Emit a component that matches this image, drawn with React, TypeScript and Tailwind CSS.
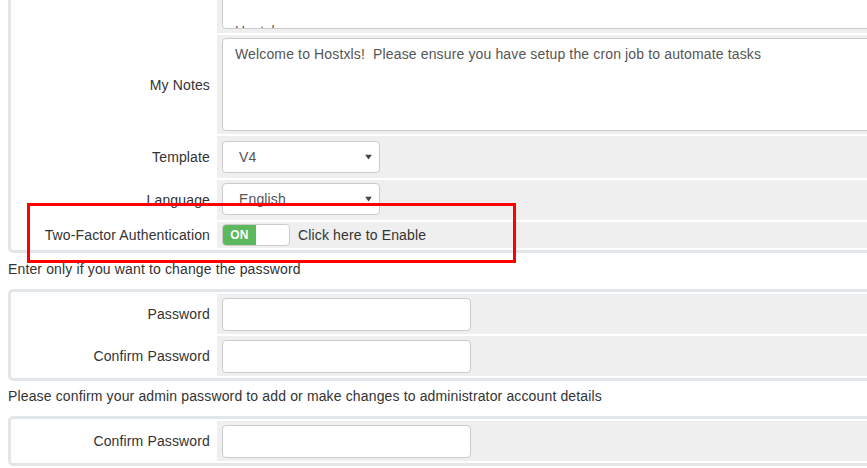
import React from 'react';

const font = { fontFamily: '"Liberation Sans", Arial, sans-serif' };

const Arrow = () => (
  <svg width="7" height="5" viewBox="0 0 7 5" className="absolute right-[7px] top-1/2 -translate-y-1/2">
    <polygon points="0,0 7,0 3.5,5" fill="#444" />
  </svg>
);

const Select = ({ value }: { value: string }) => (
  <div className="relative w-[158px] h-[32px] bg-white border border-[#ccc] rounded-[4px] pl-[16px] flex items-center text-[#555]">
    {value}
    <Arrow />
  </div>
);

const Input = () => <div className="w-[249px] h-[33px] bg-white border border-[#ccc] rounded-[4px]" />;

const Row = ({
  label,
  height,
  align = 'items-center',
  children,
}: {
  label?: string;
  height: string;
  align?: string;
  children: React.ReactNode;
}) => (
  <div className={`flex gap-[2px] ${height}`}>
    <div className="w-[202px] shrink-0 flex items-center justify-end pr-[5px] text-[#333]">{label}</div>
    <div className={`flex-1 bg-[#efefef] pl-[5px] pr-[5px] flex ${align}`}>{children}</div>
  </div>
);

const Panel = ({ children }: { children: React.ReactNode }) => (
  <div className="ml-[8px] w-[900px] border-[3px] border-[#e3e6e8] rounded-[5px] p-[2px] flex flex-col gap-[2px] bg-white">
    {children}
  </div>
);

export default function App() {
  return (
    <div
      className="relative w-[867px] h-[468px] overflow-hidden bg-white text-[14px] leading-[20px] tracking-[0.14px]"
      style={font}
    >
      <div className="-mt-[33px]">
        <Panel>
          <Row height="h-[61px]" align="items-start">
            <div className="mt-[3px] h-[54px] w-full bg-white border border-[#ccc] rounded-[4px] overflow-hidden pt-[5px] px-[12px] text-[#555]">
              <div>Happy</div>
              <div>&nbsp;</div>
              <div>Hostxls</div>
            </div>
          </Row>
          <Row label="My Notes" height="h-[99px]">
            <div className="h-[93px] w-full bg-white border border-[#ccc] rounded-[4px] pt-[5px] px-[12px] text-[#555] whitespace-pre">
              {'Welcome to Hostxls!  Please ensure you have setup the cron job to automate tasks'}
            </div>
          </Row>
          <Row label="Template" height="h-[42px]">
            <Select value="V4" />
          </Row>
          <Row label="Language" height="h-[40px]" align="items-start pt-[3px]">
            <Select value="English" />
          </Row>
          <Row label="Two-Factor Authentication" height="h-[26px]">
            <div className="flex w-[68px] h-[22px] border border-[#ccc] rounded-[4px] overflow-hidden bg-white">
              <div className="w-[33px] bg-[#5cb85c] text-white font-bold text-[12px] flex items-center justify-center">ON</div>
            </div>
            <span className="ml-[8px] text-[#333]">Click here to Enable</span>
          </Row>
        </Panel>

        <p className="mt-[6px] mb-[10px] ml-[8px] text-[#333]">Enter only if you want to change the password</p>

        <Panel>
          <Row label="Password" height="h-[40px]">
            <Input />
          </Row>
          <Row label="Confirm Password" height="h-[40px]">
            <Input />
          </Row>
        </Panel>

        <p className="mt-[5px] mb-[10px] ml-[8px] text-[#333]">
          Please confirm your admin password to add or make changes to administrator account details
        </p>

        <Panel>
          <Row label="Confirm Password" height="h-[40px]">
            <Input />
          </Row>
        </Panel>
      </div>

      <div className="absolute left-[27px] top-[203px] w-[489px] h-[60px] border-[3px] border-[#f00] pointer-events-none" />
    </div>
  );
}
